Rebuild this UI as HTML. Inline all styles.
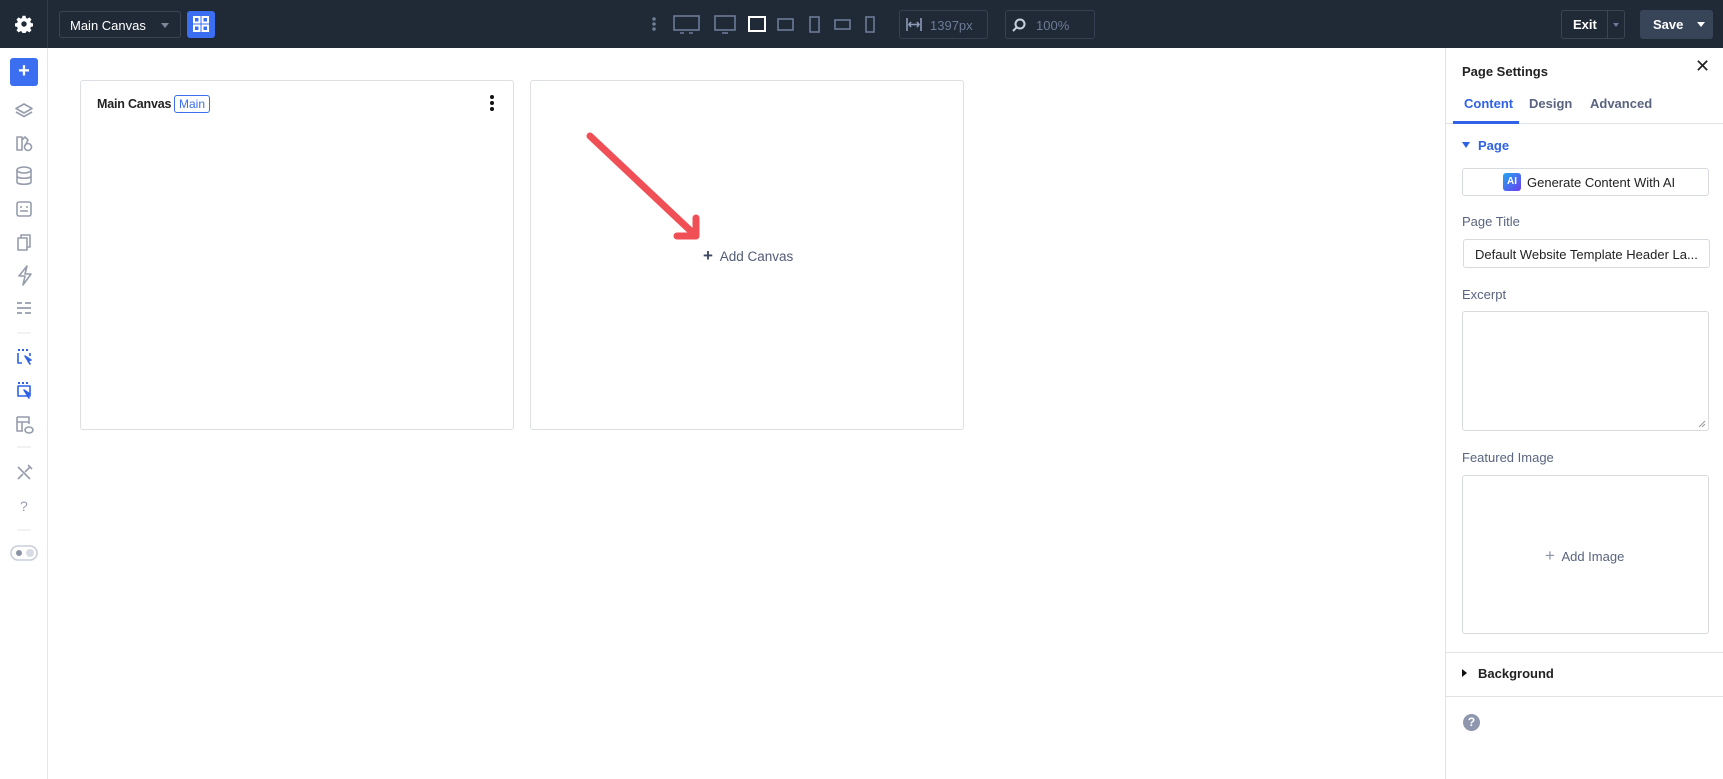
<!DOCTYPE html>
<html><head><meta charset="utf-8"><style>
*{box-sizing:border-box;margin:0;padding:0}
body{width:1723px;height:779px;overflow:hidden;background:#fff;font-family:"Liberation Sans",sans-serif;position:relative}
.a{position:absolute}
.card{border:1px solid #dcdfe4;border-radius:3px;background:#fff}
.lbl{font-size:13px;color:#5a6480}
.box{border:1px solid #d7dbe0;border-radius:3px;background:#fff}
.sep{height:1px;background:#dfe2e6}
</style></head><body>
<div class="a" style="left:0;top:0;width:1723px;height:48px;background:#202a37"></div>
<div class="a" style="left:47px;top:0;width:1px;height:48px;background:#323c4a"></div>
<svg class="a" style="left:15px;top:15px" width="18" height="18" viewBox="0 0 24 24"><path fill="#fff" d="M10 1h4l.6 3 2 .9 2.6-1.7 2.8 2.8-1.7 2.6.9 2 3 .6v4l-3 .6-.9 2 1.7 2.6-2.8 2.8-2.6-1.7-2 .9-.6 3h-4l-.6-3-2-.9-2.6 1.7-2.8-2.8 1.7-2.6-.9-2-3-.6v-4l3-.6.9-2-1.7-2.6 2.8-2.8 2.6 1.7 2-.9z"/><circle cx="12" cy="12" r="3.6" fill="#202a37"/></svg>
<div class="a" style="left:59px;top:11px;width:122px;height:27px;border:1px solid #3a4453;border-radius:3px;color:#fff;font-size:13px;padding:6px 10px">Main Canvas</div>
<div class="a" style="left:161px;top:23px;width:0;height:0;border-left:4px solid transparent;border-right:4px solid transparent;border-top:5px solid #7d8798"></div>
<div class="a" style="left:187px;top:11px;width:28px;height:27px;background:#3b6ef0;border-radius:3px"></div>
<svg class="a" style="left:192px;top:15px" width="18" height="18" viewBox="0 0 18 18" fill="none" stroke="#fff" stroke-width="2"><rect x="2" y="2" width="5.5" height="5.5"/><rect x="10.5" y="2" width="5.5" height="5.5"/><rect x="2" y="10.5" width="5.5" height="5.5"/><rect x="10.5" y="10.5" width="5.5" height="5.5"/></svg>
<svg class="a" style="left:640px;top:12px" width="460" height="26" viewBox="640 12 460 26" fill="none" stroke="#6d7b98" stroke-width="1.6">
<circle cx="654" cy="19" r="1" fill="#6d7b98"/><circle cx="654" cy="24" r="1" fill="#6d7b98"/><circle cx="654" cy="29" r="1" fill="#6d7b98"/>
<rect x="674" y="16" width="25" height="14"/><path d="M680 33h4M689 33h4"/>
<rect x="715" y="16" width="20" height="14"/><path d="M722 33h6"/>
<rect x="749" y="17" width="16" height="14" stroke="#fff" stroke-width="2"/>
<rect x="778" y="19" width="15" height="11"/>
<rect x="810" y="17" width="9" height="15"/>
<rect x="835" y="20" width="15" height="9"/>
<rect x="866" y="17" width="8" height="15"/>
</svg>
<div class="a" style="left:899px;top:10px;width:89px;height:29px;border:1px solid #364050;border-radius:3px;color:#6d7b98;font-size:13px;padding:7px 0 0 30px">1397px</div>
<svg class="a" style="left:906px;top:18px" width="16" height="13" viewBox="0 0 16 13" stroke="#8d9bb8" stroke-width="1.6" fill="none"><path d="M1 0v13M15 0v13M3 6.5h10M5 4l-2 2.5 2 2.5M11 4l2 2.5-2 2.5"/></svg>
<div class="a" style="left:1005px;top:10px;width:90px;height:29px;border:1px solid #364050;border-radius:3px;color:#6d7b98;font-size:13px;padding:7px 0 0 30px">100%</div>
<svg class="a" style="left:1012px;top:18px" width="14" height="14" viewBox="0 0 14 14" stroke="#c8d0de" stroke-width="2" fill="none"><circle cx="8" cy="6" r="4.5"/><path d="M4.5 9.5 1 13"/></svg>
<div class="a" style="left:1561px;top:10px;width:64px;height:29px;border:1px solid #3a4453;border-radius:3px"></div>
<div class="a" style="left:1607px;top:10px;width:1px;height:29px;background:#3a4453"></div>
<div class="a" style="left:1573px;top:17px;color:#fff;font-size:13px;font-weight:bold">Exit</div>
<div class="a" style="left:1613px;top:23px;border-left:3px solid transparent;border-right:3px solid transparent;border-top:4px solid #6d7b98"></div>
<div class="a" style="left:1640px;top:10px;width:73px;height:29px;background:#384559;border-radius:3px"></div>
<div class="a" style="left:1653px;top:17px;color:#fff;font-size:13px;font-weight:bold">Save</div>
<div class="a" style="left:1697px;top:22px;border-left:4px solid transparent;border-right:4px solid transparent;border-top:5px solid #fff"></div>
<!-- sidebar -->
<div class="a" style="left:0;top:48px;width:48px;height:731px;border-right:1px solid #e3e6ea"></div>
<div class="a" style="left:10px;top:58px;width:28px;height:28px;background:#3b6ef0;border-radius:3px;color:#fff;font-size:20px;font-weight:bold;text-align:center;line-height:27px">+</div>
<svg class="a" style="left:0;top:90px" width="48" height="480" viewBox="0 90 48 480" fill="none" stroke="#959cab" stroke-width="1.6" stroke-linejoin="round">
<path d="M24 104l8 4.5-8 4.5-8-4.5z"/><path d="M16 112l8 4.5 8-4.5"/>
<path d="M17 150v-13h5v13zM22 140l3-3 3 3-3 6"/><circle cx="28" cy="147" r="3.5"/>
<ellipse cx="24" cy="170" rx="7" ry="3"/><path d="M17 170v12c0 3 14 3 14 0v-12M17 176c0 3 14 3 14 0"/>
<rect x="17" y="202" width="14" height="14" rx="2"/><path d="M20 207h2M26 207h2M20 211h8"/>
<path d="M18 238h9v12h-9zM21 238v-3h9v12h-3"/>
<path d="M27 266l-8 10h6l-2 9 8-11h-6z"/>
<path d="M17 303h5M25 303h6M17 308h14M17 313h5M25 313h6" stroke-width="1.8"/>
<path d="M17 333h14" stroke="#e3e6ea" stroke-width="1"/>
<g stroke="#2f62e6"><path d="M18 350h12" stroke-dasharray="2 2" stroke-width="2"/><path d="M18 353v10h4M30 353v3"/><path d="M25 356l6 4-3 1 2 3z" fill="#2f62e6"/></g>
<g stroke="#2f62e6"><path d="M18 383h12" stroke-dasharray="2 2" stroke-width="2"/><rect x="18" y="386" width="12" height="10"/><path d="M24 390l6 4-3 1 2 3z" fill="#2f62e6"/></g>
<path d="M17 417h12v7M17 417v14h6M17 422h12M22 422v9"/><ellipse cx="29" cy="430" rx="4" ry="3"/>
<path d="M17 447h14" stroke="#e3e6ea" stroke-width="1"/>
<path d="M18 467l12 12M30 467l-5 5M18 479l5-5M28 465l4 4"/>
<text x="20" y="511" font-size="14" fill="#959cab" stroke="none" font-family="Liberation Sans">?</text>
<path d="M17 530h14" stroke="#e3e6ea" stroke-width="1"/>
<rect x="11" y="546" width="26" height="14" rx="7" stroke="#c9ced8"/><circle cx="19" cy="553" r="3" fill="#8a93a4" stroke="none"/><circle cx="30" cy="553" r="4" fill="#d7dbe3" stroke="none"/>
</svg>
<!-- cards -->
<div class="a card" style="left:80px;top:80px;width:434px;height:350px"></div>
<div class="a" style="left:97px;top:97px;font-size:12.5px;font-weight:bold;color:#222;letter-spacing:-0.2px">Main Canvas</div>
<div class="a" style="left:174px;top:95px;border:1px solid #3b6ef0;border-radius:3px;color:#3b6ef0;font-size:12px;padding:1px 4px;background:#fff">Main</div>
<div class="a" style="left:490px;top:95px;width:4px"><div style="width:4px;height:4px;border-radius:2px;background:#111;margin-bottom:2px"></div><div style="width:4px;height:4px;border-radius:2px;background:#111;margin-bottom:2px"></div><div style="width:4px;height:4px;border-radius:2px;background:#111"></div></div>
<div class="a card" style="left:530px;top:80px;width:434px;height:350px"></div>
<svg class="a" style="left:570px;top:120px" width="150" height="140" viewBox="570 120 150 140" fill="none" stroke="#ef4f55" stroke-width="7" stroke-linecap="round" stroke-linejoin="round"><path d="M590 136L694 234M696 218v18h-19"/></svg>
<div class="a" style="left:703px;top:246px;font-size:13.5px;color:#525c78"><span style="font-size:17px;font-weight:bold;color:#3f4860">+</span>&nbsp; Add Canvas</div>
<!-- right panel -->
<div class="a" style="left:1445px;top:48px;width:1px;height:731px;background:#dfe2e6"></div>
<div class="a" style="left:1462px;top:64px;font-size:13px;font-weight:bold;color:#222">Page Settings</div>
<div class="a" style="left:1695px;top:56px;font-size:18px;color:#222">✕</div>
<div class="a" style="left:1464px;top:96px;font-size:13px;color:#2f62e6;font-weight:bold">Content</div>
<div class="a" style="left:1529px;top:96px;font-size:13px;color:#5a6480;font-weight:bold">Design</div>
<div class="a" style="left:1590px;top:96px;font-size:13px;color:#5a6480;font-weight:bold">Advanced</div>
<div class="a sep" style="left:1446px;top:123px;width:277px"></div>
<div class="a" style="left:1453px;top:121px;width:66px;height:3px;background:#2f62e6"></div>
<div class="a" style="left:1462px;top:142px;border-left:4px solid transparent;border-right:4px solid transparent;border-top:6px solid #2f62e6"></div>
<div class="a" style="left:1478px;top:138px;font-size:13px;color:#2f62e6;font-weight:bold">Page</div>
<div class="a box" style="left:1462px;top:168px;width:247px;height:28px"></div>
<div class="a" style="left:1503px;top:173px;width:18px;height:18px;border-radius:3px;background:linear-gradient(135deg,#23a6f0,#6a3df0);color:#fff;font-size:10px;font-weight:bold;text-align:center;line-height:18px">AI</div>
<div class="a" style="left:1527px;top:175px;font-size:13px;color:#222">Generate Content With AI</div>
<div class="a lbl" style="left:1462px;top:214px">Page Title</div>
<div class="a box" style="left:1463px;top:239px;width:247px;height:29px;font-size:13px;color:#222;padding:7px 11px">Default Website Template Header La...</div>
<div class="a lbl" style="left:1462px;top:287px">Excerpt</div>
<div class="a box" style="left:1462px;top:311px;width:247px;height:120px"></div>
<svg class="a" style="left:1698px;top:420px" width="8" height="8" stroke="#999" stroke-width="1"><path d="M1 7l6-6M4 7l3-3"/></svg>
<div class="a lbl" style="left:1462px;top:450px">Featured Image</div>
<div class="a box" style="left:1462px;top:475px;width:247px;height:159px"></div>
<div class="a" style="left:1545px;top:546px;font-size:13px;color:#5a6480"><span style="font-size:17px;color:#8a93a8">+</span>&nbsp; Add Image</div>
<div class="a sep" style="left:1446px;top:652px;width:277px"></div>
<div class="a" style="left:1462px;top:669px;border-top:4px solid transparent;border-bottom:4px solid transparent;border-left:5px solid #111"></div>
<div class="a" style="left:1478px;top:666px;font-size:13px;font-weight:bold;color:#222">Background</div>
<div class="a sep" style="left:1446px;top:696px;width:277px"></div>
<div class="a" style="left:1463px;top:714px;width:17px;height:17px;border-radius:50%;background:#8e97ad;color:#fff;font-size:12px;font-weight:bold;text-align:center;line-height:17px">?</div>
</body></html>
